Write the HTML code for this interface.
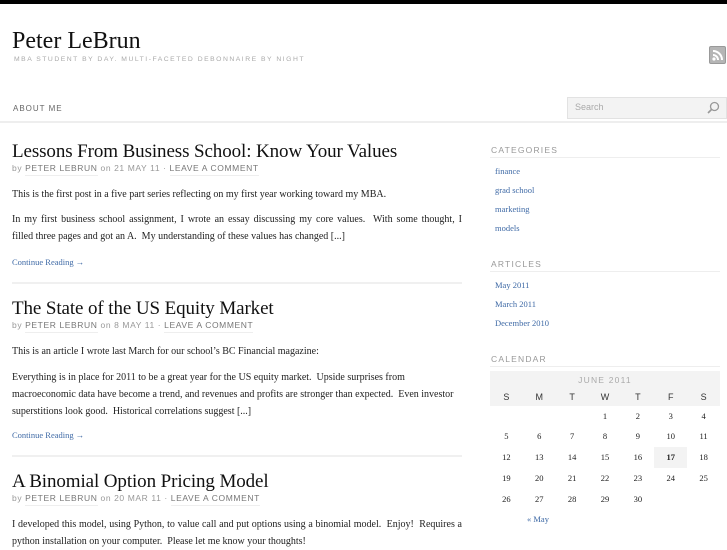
<!DOCTYPE html>
<html><head><meta charset="utf-8"><style>
*{margin:0;padding:0;box-sizing:border-box}
body{width:727px;height:545px;overflow:hidden;background:#fff;position:relative;font-family:"Liberation Serif",serif;color:#222}
.a{position:absolute;white-space:nowrap}
.sans{font-family:"Liberation Sans",sans-serif}
.t{font-size:19px;color:#111;line-height:22px;letter-spacing:-.1px}
.by{font-size:8.5px;color:#999;letter-spacing:.6px;line-height:11px}
.by span{color:#777;border-bottom:1px solid #eee;padding-bottom:2px}
.p{font-size:10px;line-height:17px;color:#222}
.lk{color:#3f6aa6;font-size:8.5px}
.hr{position:absolute;left:12px;width:450px;height:2px;background:#f0f0f0}
.wh{font-size:8.5px;color:#999;letter-spacing:1.2px}
.wl{position:absolute;left:490px;width:230px;height:1px;background:#eee}
.cal{position:absolute;left:490px;width:230px;display:flex}
.cal div{width:32.86px;text-align:center}
</style></head><body>
<div class="a" style="left:0;top:0;width:727px;height:4px;background:#000"></div>
<div class="a" style="left:12px;top:28px;font-size:24px;color:#111">Peter LeBrun</div>
<div class="a sans" style="left:14px;top:56px;font-size:6.8px;color:#aaa;letter-spacing:1.5px">MBA STUDENT BY DAY. MULTI-FACETED DEBONNAIRE BY NIGHT</div>
<div class="a" style="left:709px;top:46px;width:17px;height:18px;background:#b5b5b5;border:1px solid #999;border-radius:2px"><svg width="15" height="16" viewBox="0 0 15 16"><circle cx="4" cy="12" r="1.6" fill="#fff"/><path d="M3 8a5 5 0 0 1 5 5M3 4a9 9 0 0 1 9 9" stroke="#fff" stroke-width="2" fill="none"/></svg></div>
<div class="a sans" style="left:13px;top:104px;font-size:8px;color:#666;letter-spacing:1px">ABOUT ME</div>
<div class="a" style="left:567px;top:97px;width:160px;height:22px;background:#f3f3f3;border:1px solid #e2e2e2"></div>
<div class="a sans" style="left:575px;top:102px;font-size:9px;color:#aaa">Search</div>
<svg class="a" style="left:706px;top:101px" width="14" height="14" viewBox="0 0 14 14"><circle cx="8.5" cy="5.5" r="4" stroke="#999" stroke-width="1.3" fill="none"/><path d="M5.5 8.5L2 12" stroke="#999" stroke-width="1.6"/></svg>
<div class="a" style="left:0;top:121px;width:727px;height:2px;background:#eee"></div>

<div class="a t" style="left:12px;top:141px">Lessons From Business School: Know Your Values</div>
<div class="a sans by" style="left:12px;top:163px">by <span>PETER LEBRUN</span> on 21 MAY 11 · <span>LEAVE A COMMENT</span></div>
<div class="a p" style="left:12px;top:186px">This is the first post in a five part series reflecting on my first year working toward my MBA.</div>
<div class="a p" style="left:12px;top:211px;width:450px;white-space:normal;text-align:justify;text-align-last:justify">In my first business school assignment, I wrote an essay discussing my core values.&nbsp; With some thought, I</div>
<div class="a p" style="left:12px;top:228px">filled three pages and got an A.&nbsp; My understanding of these values has changed [...]</div>
<div class="a lk" style="left:12px;top:257px">Continue Reading →</div>
<div class="hr" style="top:282px"></div>

<div class="a t" style="left:12px;top:298px">The State of the US Equity Market</div>
<div class="a sans by" style="left:12px;top:320px">by <span>PETER LEBRUN</span> on 8 MAY 11 · <span>LEAVE A COMMENT</span></div>
<div class="a p" style="left:12px;top:343px">This is an article I wrote last March for our school’s BC Financial magazine:</div>
<div class="a p" style="left:12px;top:369px;width:450px;white-space:normal">Everything is in place for 2011 to be a great year for the US equity market.&nbsp; Upside surprises from macroeconomic data have become a trend, and revenues and profits are stronger than expected.&nbsp; Even investor superstitions look good.&nbsp; Historical correlations suggest [...]</div>
<div class="a lk" style="left:12px;top:430px">Continue Reading →</div>
<div class="hr" style="top:455px"></div>

<div class="a t" style="left:12px;top:471px">A Binomial Option Pricing Model</div>
<div class="a sans by" style="left:12px;top:493px">by <span>PETER LEBRUN</span> on 20 MAR 11 · <span>LEAVE A COMMENT</span></div>
<div class="a p" style="left:12px;top:516px;width:450px;white-space:normal;text-align:justify">I developed this model, using Python, to value call and put options using a binomial model.&nbsp; Enjoy!&nbsp; Requires a python installation on your computer.&nbsp; Please let me know your thoughts!</div>

<div class="a sans wh" style="left:491px;top:145px">CATEGORIES</div>
<div class="wl" style="top:157px"></div>
<div class="a lk" style="left:495px;top:166px">finance</div>
<div class="a lk" style="left:495px;top:185px">grad school</div>
<div class="a lk" style="left:495px;top:204px">marketing</div>
<div class="a lk" style="left:495px;top:223px">models</div>
<div class="a sans wh" style="left:491px;top:259px">ARTICLES</div>
<div class="wl" style="top:271px"></div>
<div class="a lk" style="left:495px;top:280px">May 2011</div>
<div class="a lk" style="left:495px;top:299px">March 2011</div>
<div class="a lk" style="left:495px;top:318px">December 2010</div>
<div class="a sans wh" style="left:491px;top:354px">CALENDAR</div>
<div class="wl" style="top:366px"></div>
<div class="a" style="left:490px;top:371px;width:230px;height:35px;background:#f3f3f3"></div>
<div class="a" style="left:654px;top:447px;width:33px;height:21px;background:#f3f3f3"></div>
<div class="a sans" style="left:490px;top:375px;width:230px;text-align:center;font-size:8.5px;color:#aaa;letter-spacing:1.2px">JUNE 2011</div>
<div class="cal sans" style="top:392px;font-size:9px;color:#333"><div>S</div><div>M</div><div>T</div><div>W</div><div>T</div><div>F</div><div>S</div></div>
<div class="cal" style="top:411px;font-size:8.5px"><div></div><div></div><div></div><div>1</div><div>2</div><div>3</div><div>4</div></div>
<div class="cal" style="top:431px;font-size:8.5px"><div>5</div><div>6</div><div>7</div><div>8</div><div>9</div><div>10</div><div>11</div></div>
<div class="cal" style="top:452px;font-size:8.5px"><div>12</div><div>13</div><div>14</div><div>15</div><div>16</div><div><b>17</b></div><div>18</div></div>
<div class="cal" style="top:473px;font-size:8.5px"><div>19</div><div>20</div><div>21</div><div>22</div><div>23</div><div>24</div><div>25</div></div>
<div class="cal" style="top:494px;font-size:8.5px"><div>26</div><div>27</div><div>28</div><div>29</div><div>30</div><div></div><div></div></div>
<div class="a lk" style="left:527px;top:514px">« May</div>
</body></html>
